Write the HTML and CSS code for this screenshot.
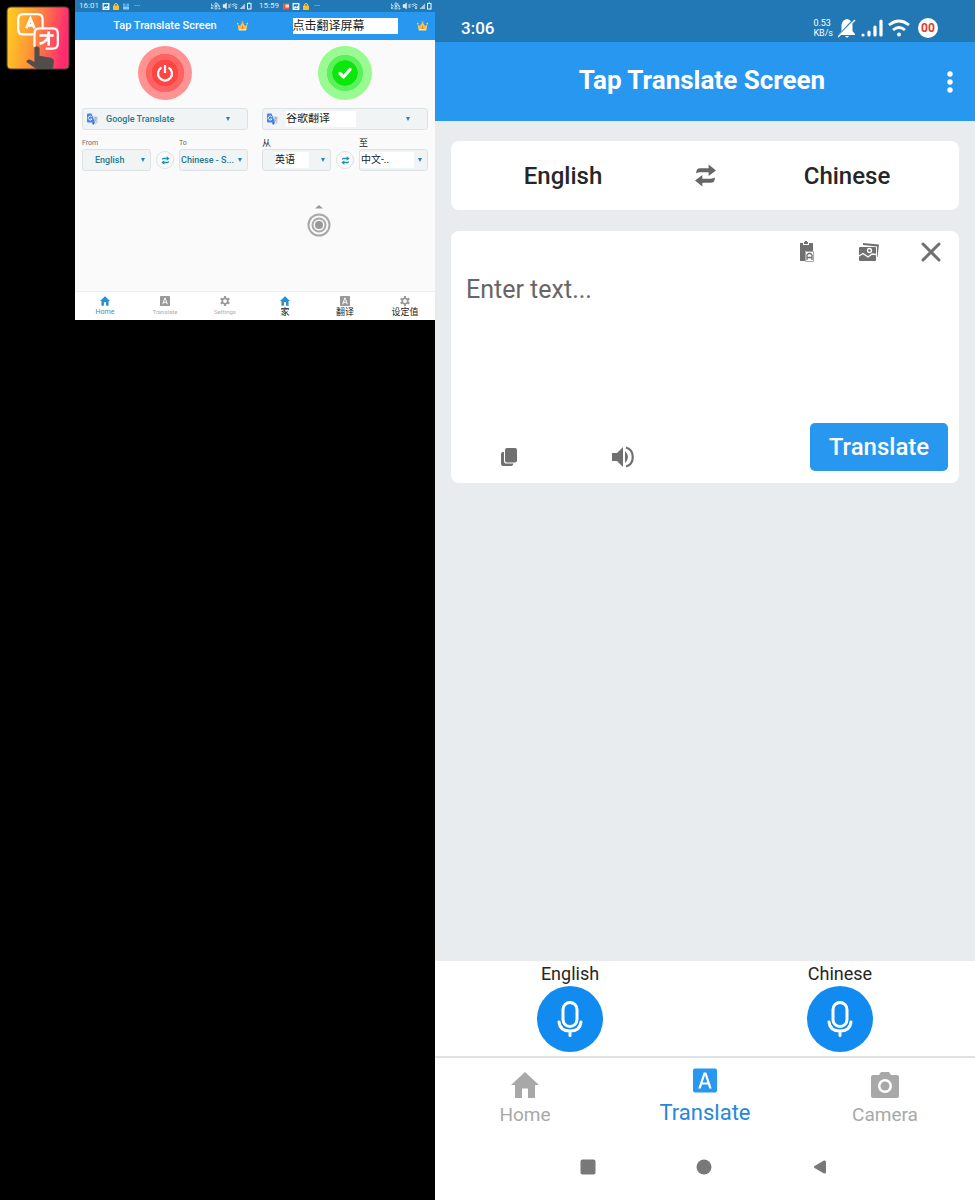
FILE: index.html
```
<!DOCTYPE html>
<html lang="en">
<head>
<meta charset="utf-8">
<meta name="viewport" content="width=device-width, initial-scale=1">
<title>Tap Translate Screen</title>
<link rel="stylesheet" href="styles.css">
</head>
<body>
<svg class="sprite" aria-hidden="true">
  <symbol id="home" viewBox="0 0 28 26"><path d="M14 0 28 13H24V26H17V16.500H11V26H4V13H0Z" fill="currentColor"/></symbol>
  <symbol id="letter" viewBox="0 0 24 24"><path fill="currentColor" fill-rule="evenodd" d="M2 0H22Q24 0 24 2V22Q24 24 22 24H2Q0 24 0 22V2Q0 0 2 0ZM10.700 4 5.300 20H7.700L9 16H15L16.300 20H18.700L13.300 4ZM12 6.700 14.400 14H9.600Z"/></symbol>
  <symbol id="gear" viewBox="0 0 24 24"><circle cx="12" cy="12" r="6.500" fill="none" stroke="currentColor" stroke-width="4"/><path stroke="currentColor" stroke-width="5" d="M12 0v5M12 19v5M1.600 6l4.300 2.500M18.100 15.500l4.300 2.500M1.600 18l4.300-2.500M18.100 8.500 22.400 6"/></symbol>
  <symbol id="arrows" viewBox="0 0 20 22"><path fill="currentColor" d="M1 9Q1 4 5 4H13V.5L20 6.200 13 11.500V8H5Q2.500 8 1 9ZM19 13Q19 18 15 18H7V21.500L0 15.800 7 10.500V14H15Q17.500 14 19 13Z"/></symbol>
  <symbol id="gtranslate" viewBox="0 0 22 24"><path fill="#dce0e6" d="M9 6H20Q22 6 22 8V20L17 23H13Z"/><path fill="#4285e8" d="M2 1H9L16 19H2Q0 19 0 17V3Q0 1 2 1Z"/><path fill="#2558b8" d="M10 19h6l-4 5Z"/><path d="M14 10h6M17 8v2M19 10q-1 4-4 6M15 12l4 5" stroke="#748092" fill="none"/><path d="M9.500 7.500A4 4 0 1 0 10 12H6.500" stroke="#fff" stroke-width="1.800" fill="none"/></symbol>
  <symbol id="crown" viewBox="0 0 22 20"><path fill="#ffc04a" d="M3 18 1 6 6 10 11 2 16 10 21 6 19 18Z"/><path fill="#e88726" d="M8 18 11 8l3 10Z"/><path fill="#ffe3a0" d="M4 16h14v3H4Z"/><circle cx="1.500" cy="5" r="1.500" fill="#ffe08c"/><circle cx="11" cy="2" r="2" fill="#ff9d3c"/><circle cx="20.500" cy="5" r="1.500" fill="#ffe08c"/></symbol>
  <symbol id="picture" viewBox="0 0 14 12"><path fill="#fff" fill-rule="evenodd" d="M1 0H13V12H1ZM3 2V8L6 5 8 7 11 4V2ZM3 10H11L8 8Z"/></symbol>
  <symbol id="lock" viewBox="0 0 14 14"><path d="M4 6V4a3 3 0 0 1 6 0v2" stroke="#ffc845" stroke-width="2" fill="none"/><rect x="1" y="5" width="12" height="9" rx="1" fill="#ffc020"/></symbol>
  <symbol id="app" viewBox="0 0 14 14"><path d="M1 1h5v5H1ZM8 1h5v5H8Z" fill="#4db8ff"/><path d="M1 7h12v6H1Z" fill="#7fd0ff"/></symbol>
  <symbol id="flag" viewBox="0 0 14 14"><path d="M1 1h12v12H1Z" fill="#f4553e"/><path d="M6 3h7v6H6Z" fill="#ffe6cf"/></symbol>
  <symbol id="smallstatus" viewBox="0 0 82 16"><g fill="none" stroke="#dcecf8" stroke-width="1.500"><path d="M1 3v4h4M8 2v5M8 2h4v5H8M14 3v4h3M1 9v5M1 12l4-3M2 12l3 2M8 9v5h4V9ZM15 9h3M15 12h3v2h-3"/></g><path d="M24 5h3l4-3v12l-4-3h-3ZM34 4l4 8M38 4v8M34 12l5-9" stroke="#dcecf8" fill="#dcecf8"/><path d="M41 6Q47 1 53 6M43 9Q47 5 51 9M50 8v6M48 11l2 3 2-3" stroke="#dcecf8" stroke-width="1.600" fill="none"/><path d="M57 14 68 3v11Z" fill="#a6cce8"/><rect x="73" y="3" width="7" height="11" fill="none" stroke="#fff" stroke-width="2"/><path d="M75 1h3v2h-3Z" fill="#fff"/></symbol>
  <symbol id="mic" viewBox="0 0 26 36"><g fill="none" stroke="#fff" stroke-width="3" stroke-linecap="round"><rect x="6" y="1.500" width="14" height="24" rx="7"/><path d="M2 21Q3 30 13 30T24 21M13 30v4.500"/></g></symbol>
</svg>
<div class="layout">
  <aside class="rail">
    <svg class="logo" viewBox="0 0 64 64" role="img" aria-label="Tap Translate logo">
      <defs><linearGradient id="lg" x1="0" y1="0" x2="1" y2="0.150"><stop offset="0" stop-color="#ffd21e"/><stop offset="0.450" stop-color="#ff9635"/><stop offset="1" stop-color="#ff2a72"/></linearGradient></defs>
      <rect x="2" y="2" width="61" height="61" rx="4" fill="url(#lg)" stroke="#5c4634"/>
      <g fill="none" stroke="#fff" stroke-width="2.200"><path d="M28 29H18Q13 29 13 24V14Q13 9 18 9H32Q37 9 37 14V23"/><path d="M29 41V28Q29 23 34 23H47Q52 23 52 28V38Q52 43 47 43H40"/><path stroke-width="2.600" d="M21 23 25 13.500 29 23M22.500 20h5"/><path stroke-width="2.600" d="M34 30H48M43 26V40M43 31Q40 37 34 38"/></g>
      <path d="M29 42Q31 39 34 42V50L45 52Q49 53 48 57L47 63H31L21 56Q22 53 25 54L29 56Z" fill="#514d4b"/>
    </svg>
  </aside>

  <section class="mini" aria-label="English preview">
    <div class="mini-status"><span>16:01</span><svg><use href="#picture"/></svg><svg><use href="#lock"/></svg><svg><use href="#app"/></svg><span class="dots">···</span><svg class="mini-signals"><use href="#smallstatus"/></svg></div>
    <header class="mini-header"><h2>Tap Translate Screen</h2><svg class="crown"><use href="#crown"/></svg></header>
    <div class="mini-main">
      <button class="power power-off" aria-label="Turn on"><svg viewBox="0 0 18 18"><path d="M5.500 3.500a7 7 0 1 0 7 0M9 1v8" fill="none" stroke="#fff" stroke-width="2.200"/></svg></button>
      <div class="pick engine"><svg class="gicon"><use href="#gtranslate"/></svg><select aria-label="Translation engine"><option>Google Translate</option></select></div>
      <div class="pair">
        <div class="field"><label for="from1">From</label><div class="pick"><select id="from1"><option>English</option></select></div></div>
        <button class="mini-swap" aria-label="Swap languages"><svg><use href="#arrows"/></svg></button>
        <div class="field"><label for="to1">To</label><div class="pick wide"><select id="to1"><option>Chinese - S...</option></select></div></div>
      </div>
    </div>
    <nav class="mini-tabs"><a class="on" href="#home1"><svg><use href="#home"/></svg>Home</a><a href="#translate1"><svg><use href="#letter"/></svg>Translate</a><a href="#settings1"><svg><use href="#gear"/></svg>Settings</a></nav>
  </section>

  <section class="mini zh" lang="zh" aria-label="中文">
    <div class="mini-status"><span>15:59</span><svg><use href="#flag"/></svg><svg><use href="#picture"/></svg><svg><use href="#lock"/></svg><span class="dots">···</span><svg class="mini-signals"><use href="#smallstatus"/></svg></div>
    <header class="mini-header"><h2>点击翻译屏幕</h2><svg class="crown"><use href="#crown"/></svg></header>
    <div class="mini-main">
      <button class="power power-on" aria-label="On"><svg viewBox="0 0 18 18"><path d="M4 9.500 7.500 13 14 5.500" fill="none" stroke="#fff" stroke-width="3.200" stroke-linecap="round"/></svg></button>
      <div class="pick engine"><svg class="gicon"><use href="#gtranslate"/></svg><select aria-label="翻译引擎"><option>谷歌翻译</option></select></div>
      <div class="pair">
        <div class="field"><label for="from2">从</label><div class="pick"><select id="from2"><option>英语</option></select></div></div>
        <button class="mini-swap" aria-label="交换"><svg><use href="#arrows"/></svg></button>
        <div class="field"><label for="to2">至</label><div class="pick wide"><select id="to2"><option>中文-..</option></select></div></div>
      </div>
      <button class="bubble" aria-label="拖动"><svg viewBox="0 0 24 34"><path d="M8 4.500 12 1l4 3.500Z" fill="#999"/><g fill="none" stroke="#a8a8a8" stroke-width="2"><circle cx="12" cy="21" r="10.500"/><circle cx="12" cy="21" r="6.500"/></g><circle cx="12" cy="21" r="4" fill="#999"/></svg></button>
    </div>
    <nav class="mini-tabs"><a class="on" href="#home2"><svg><use href="#home"/></svg><span>家</span></a><a href="#translate2"><svg><use href="#letter"/></svg><span>翻译</span></a><a href="#settings2"><svg><use href="#gear"/></svg><span>设定值</span></a></nav>
  </section>

  <main class="phone">
    <div class="status"><time>3:06</time><div class="signals">
      <span class="speed">0.53<br>KB/s</span>
      <svg width="18" height="20" viewBox="0 0 18 20"><path d="M9 1Q14 2 14.500 7V13L17 16V17H1V16L3.500 13V7Q4 2 9 1ZM7 18h4q-2 3-4 0Z" fill="#fff"/><path d="M1 17 16 1" stroke="#2277b5" stroke-width="1.500"/><path d="M0 19 17 2" stroke="#fff" stroke-width="1.500"/></svg>
      <svg width="22" height="18" viewBox="0 0 22 18"><g stroke="#fff" stroke-width="3.200" stroke-linecap="round"><path d="M2 16v0M8 16v-3M14 16V8M20 16V2"/></g></svg>
      <svg width="22" height="18" viewBox="0 0 22 18"><g fill="none" stroke="#fff" stroke-width="2.800"><path d="M1 6Q11-2 21 6M5 11Q11 6 17 11"/></g><circle cx="11" cy="15.500" r="2" fill="#fff"/></svg>
      <span class="badge">00</span></div></div>
    <header class="bar"><h1>Tap Translate Screen</h1><button class="more" aria-label="More options"><svg width="6" height="22" viewBox="0 0 6 22" fill="#fff"><circle cx="3" cy="3" r="2.700"/><circle cx="3" cy="11" r="2.700"/><circle cx="3" cy="19" r="2.700"/></svg></button></header>
    <div class="content">
      <div class="card languages"><button>English</button><button class="swap" aria-label="Swap languages"><svg><use href="#arrows"/></svg></button><button>Chinese</button></div>
      <div class="card editor">
        <div class="tools">
          <button aria-label="Paste"><svg width="16" height="22" viewBox="0 0 16 22"><path fill="#707070" d="M1 2H4V4H10V2H14V9H6V20H1Z"/><path fill="#707070" d="M5 3V1h1V0h2v1h1v2Z"/><path fill="#707070" d="M1 5h13v5H1Z"/><path d="M6.500 10.500h8v10h-8Z" fill="#fff" stroke="#aaa"/><path d="M8 19v-5l1.500-1.500h2L13 14v5M8 16.500h5" fill="none" stroke="#707070" stroke-width="1.300"/></svg></button>
          <button aria-label="Choose picture"><svg width="20" height="20" viewBox="0 0 20 20"><path d="M4 1 20 2.500 18.500 15H18V4.500L4 3Z" fill="#707070"/><rect y="5" width="17" height="14" rx="1" fill="#707070"/><path d="M0 14 4 11.500 9 15 13 12 17 12.500" stroke="#fff" stroke-width="1.400" fill="none"/><circle cx="10.500" cy="8.500" r="2" fill="none" stroke="#fff" stroke-width="1.300"/></svg></button>
          <button aria-label="Clear"><svg width="20" height="20" viewBox="0 0 20 20"><path d="M2 2 18 18M18 2 2 18" stroke="#707070" stroke-width="3" stroke-linecap="round"/></svg></button>
        </div>
        <textarea aria-label="Text to translate" placeholder="Enter text..."></textarea>
        <div class="actions">
          <button class="tool" aria-label="Copy"><svg width="18" height="20" viewBox="0 0 18 20"><path d="M4 5H3Q1 5 1 7V17Q1 19 3 19H11Q13 19 13.500 16.500H6Q4 16.500 4 14Z" fill="#707070"/><rect x="5" y="1" width="12" height="14.500" rx="2" fill="#707070"/></svg></button>
          <button class="tool" aria-label="Listen"><svg width="24" height="22" viewBox="0 0 24 22"><path d="M1 7H6L12 1V21L6 15H1Z" fill="#707070"/><path d="M14 5q6 6 0 12Z" fill="#707070"/><path d="M15 1.500C24 4 24 18 15 20.500" fill="none" stroke="#707070" stroke-width="2.200"/></svg></button>
          <button class="go">Translate</button>
        </div>
      </div>
    </div>
    <div class="voices">
      <div><span>English</span><button aria-label="Speak English"><svg><use href="#mic"/></svg></button></div>
      <div><span>Chinese</span><button aria-label="Speak Chinese"><svg><use href="#mic"/></svg></button></div>
    </div>
    <nav class="tabs">
      <a href="#home"><svg><use href="#home"/></svg>Home</a>
      <a class="on" href="#translate"><svg><use href="#letter"/></svg>Translate</a>
      <a href="#camera"><svg viewBox="0 0 28 26"><path fill="currentColor" fill-rule="evenodd" d="M2 3H8L10 0H18L20 3H26Q28 3 28 5V24Q28 26 26 26H2Q0 26 0 24V5Q0 3 2 3ZM14 7A7 7 0 1 0 14 21A7 7 0 1 0 14 7Z"/><circle cx="14" cy="14" r="4.500" fill="currentColor"/></svg>Camera</a>
    </nav>
    <div class="system">
      <button aria-label="Recent apps"><svg viewBox="0 0 16 16"><rect x="0.500" y="0.500" width="15" height="15" rx="2"/></svg></button>
      <button aria-label="Home screen"><svg viewBox="0 0 16 16"><circle cx="8" cy="8" r="7.500"/></svg></button>
      <button aria-label="Back"><svg viewBox="0 0 16 16"><path d="M2.500 7 12 1.500Q14 1 14 3V13Q14 15 12 14.500L2.500 9Q1 8 2.500 7Z"/></svg></button>
    </div>
  </main>
</div>
</body>
</html>
```
FILE: styles.css
```
* { box-sizing: border-box; }
body { margin: 0; background: #000; font-family: Roboto, "Noto Sans CJK SC", sans-serif; color: #262626; }
button { border: 0; padding: 0; background: none; font: inherit; color: inherit; display: flex; align-items: center; justify-content: center; }
a { color: inherit; text-decoration: none; }
h1, h2 { margin: 0; white-space: nowrap; }
svg { display: block; flex: none; }
.sprite { position: absolute; width: 0; height: 0; }
.layout { display: grid; grid-template-columns: 5fr 12fr 12fr 36fr; min-height: 100vh; align-items: start; }
.rail { padding: 5px; }
.logo { width: 100%; }

/* Small previews */
.mini { display: flex; flex-direction: column; min-height: 320px; background: #fafafa; color: #26788f; }
.mini-status { display: flex; align-items: center; gap: 2px; height: 12px; padding: 0 3px 0 4px; background: #2277b5; color: #dcecf8; font-size: 8px; line-height: 12px; }
.mini-status svg { width: 8px; height: 7px; }
.mini-status span { margin-right: 1px; }
.mini-status .dots { margin-left: 2px; }
.mini-status .mini-signals { width: 41px; height: 8px; margin-left: auto; }
.mini-header { display: grid; grid-template-columns: 1fr auto 1fr; align-items: center; height: 28px; background: #2897ef; color: #fff; }
.mini-header h2 { grid-column: 2; font-size: 11px; line-height: 16px; font-weight: 500; }
.crown { width: 11px; height: 10px; margin-right: 7px; justify-self: end; }
.mini-main { position: relative; flex: 1; padding: 6px 7px; }
.power { width: 54px; height: 54px; margin: 0 auto 8px; border-radius: 50%; }
.power svg { width: 18px; height: 18px; }
.power-off { background: radial-gradient(circle closest-side, #ff4444 48%, #ff6361 50% 70%, #ff9292 72%); }
.power-on { background: radial-gradient(circle closest-side, #0ce80c 46%, #5cf05c 48% 66%, #98fa90 68%); }
.pick { position: relative; display: flex; align-items: center; height: 22px; border: 1px solid #dce3e7; border-radius: 3px; background: #f1f4f5; }
.pick::after { content: ""; position: absolute; right: 5px; border: 2px solid transparent; border-top: 4px solid #2484b4; border-bottom: 0; }
.pick select { appearance: none; width: 100%; height: 20px; padding: 0 12px; border: 0; background: transparent; color: inherit; font: 500 9px/12px Roboto, "Noto Sans CJK SC", sans-serif; }
.pick.wide select { padding: 0 0 0 1px; }
.engine::after { right: 17px; }
.engine select { padding: 0 0 0 8px; }
.gicon { width: 11px; height: 12px; margin-left: 4px; }
.pair { display: grid; grid-template-columns: 1fr 18px 1fr; gap: 5px; align-items: end; margin-top: 8px; }
.field { min-width: 0; }
.field label { display: block; height: 11px; color: #6c6c6c; font-size: 7px; line-height: 10px; }
.mini-swap { width: 18px; height: 18px; margin-bottom: 2px; border: 1px solid #dde2e5; border-radius: 50%; color: #1b94aa; }
.mini-swap svg { width: 9px; height: 9px; }
.mini-tabs { display: grid; grid-template-columns: repeat(3, 1fr); height: 29px; padding-top: 4px; border-top: 1px solid #eee; background: #fff; }
.mini-tabs a { display: flex; flex-direction: column; align-items: center; gap: 2px; color: #b0b0b0; font-size: 6px; line-height: 8px; }
.mini-tabs svg { width: 10px; height: 10px; color: #999; }
.mini-tabs .on { color: #2897c0; font-size: 7px; }
.mini-tabs .on svg { color: #288fd2; }
.zh select, .zh label, .zh .mini-tabs a { color: #222; }
.zh .mini-header h2 { width: 105px; background: #fff; color: #222; font-size: 12px; font-weight: 400; }
.zh .pick select { height: 16px; font-size: 10px; font-weight: 400; background: linear-gradient(#fff, #fff) no-repeat 12px 0 / 34px 100%; }
.zh .engine select { font-size: 11px; background-position: 8px 0; background-size: 70px 100%; }
.zh .wide select { background-position: 0 0; background-size: 54px 100%; }
.zh .field label { font-size: 9px; }
.zh .mini-tabs a { font-size: 9px; }
.bubble { position: absolute; left: 52px; top: 164px; }
.bubble svg { width: 24px; height: 34px; }

/* Main screen */
.phone { display: flex; flex-direction: column; min-height: 100vh; background: #fff; }
.status { display: flex; align-items: center; justify-content: space-between; height: 42px; padding: 13px 37px 0 26px; background: #2277b5; color: #fff; font-size: 17px; font-weight: 500; }
.signals { display: flex; align-items: center; gap: 5px; }
.speed { font-size: 9px; line-height: 10px; font-weight: 400; }
.badge { width: 20px; height: 20px; margin-left: 3px; border-radius: 50%; background: #fff; color: #e03a32; font-size: 12px; line-height: 20px; font-weight: 700; text-align: center; }
.bar { display: grid; grid-template-columns: 50px 1fr 50px; align-items: center; height: 79px; background: #2897ef; color: #fff; }
.bar h1 { grid-column: 2; justify-self: center; margin: 0 6px 4px 0; font-size: 26px; line-height: 32px; font-weight: 700; }
.more { height: 48px; }
.content { flex: 1; padding: 20px 16px; background: #e8ecef; }
.card { border-radius: 8px; background: #fff; }
.languages { display: grid; grid-template-columns: 224px 1fr 224px; align-items: center; height: 69px; margin-bottom: 21px; font-size: 24px; font-weight: 500; }
.languages svg { width: 21px; height: 23px; color: #666; }
.editor { display: flex; flex-direction: column; height: 252px; padding: 10px 11px 12px 15px; }
.tools { display: flex; justify-content: flex-end; gap: 38px; padding-right: 5px; }
.tools button { width: 24px; height: 22px; }
textarea { flex: 1; width: 100%; margin: 11px 0 0; padding: 0; border: 0; resize: none; background: none; font: 400 25px/32px Roboto, sans-serif; color: #262626; }
textarea::placeholder { color: #666; }
.actions { display: flex; align-items: flex-end; }
.tool { width: 86px; height: 28px; }
.tool + .tool { margin-left: 28px; }
.go { width: 138px; height: 48px; margin-left: auto; border-radius: 5px; background: #2897ef; color: #fff; font-size: 24px; font-weight: 500; }
.voices { display: grid; grid-template-columns: 1fr 1fr; height: 95px; }
.voices div { display: flex; flex-direction: column; align-items: center; font-size: 18px; line-height: 25px; }
.voices button { width: 66px; height: 66px; border-radius: 50%; background: #118bef; }
.voices svg { width: 26px; height: 36px; }
.tabs { display: grid; grid-template-columns: repeat(3, 1fr); height: 77px; border-top: 2px solid #e2e2e2; }
.tabs a { display: flex; flex-direction: column; align-items: center; gap: 4px; padding-top: 14px; color: #a8a8a8; font-size: 19px; line-height: 26px; }
.tabs svg { width: 28px; height: 26px; }
.tabs .on { padding-top: 10px; gap: 7px; color: #2488db; font-size: 22px; }
.tabs .on svg { width: 24px; height: 25px; color: #2897ef; }
.system { display: flex; justify-content: center; gap: 68px; height: 67px; padding: 10px 2px 0 0; }
.system button { width: 48px; height: 48px; }
.system svg { width: 16px; height: 16px; fill: #787878; }
```
